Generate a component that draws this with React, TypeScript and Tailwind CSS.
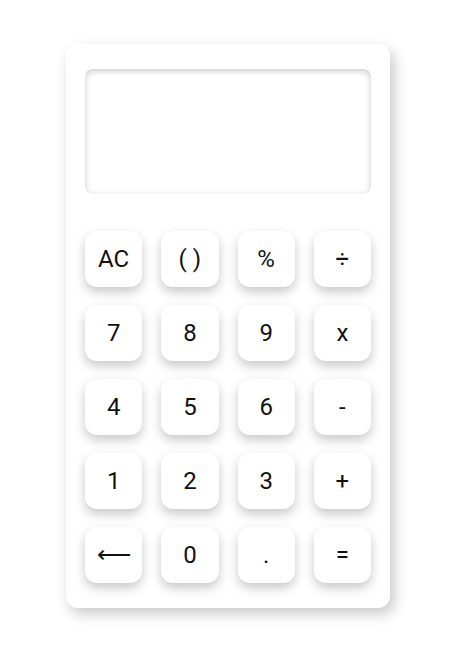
const KEYS = ["AC", "( )", "%", "÷", "7", "8", "9", "x", "4", "5", "6", "-", "1", "2", "3", "+", "⟵", "0", ".", "="];

export default function App() {
  return (
    <div className="min-h-[657px] bg-white pl-[66px] pt-[44px] font-['Roboto',sans-serif]">
      <div className="w-[324px] rounded-xl bg-white px-[19px] pb-[25px] pt-[25px] shadow-[4px_6px_14px_rgba(0,0,0,0.22)]">
        <div className="h-[125px] rounded-lg bg-white shadow-[inset_0_2px_6px_rgba(0,0,0,0.22)]" />
        <div className="mt-[37px] grid grid-cols-4 gap-x-[19px] gap-y-[18px]">
          {KEYS.map((k) => (
            <button
              key={k}
              type="button"
              className="flex h-[56px] items-center justify-center rounded-xl bg-white text-[24px] text-[#111] shadow-[0_5px_11px_rgba(0,0,0,0.22)]"
            >
              {k}
            </button>
          ))}
        </div>
      </div>
    </div>
  );
}
